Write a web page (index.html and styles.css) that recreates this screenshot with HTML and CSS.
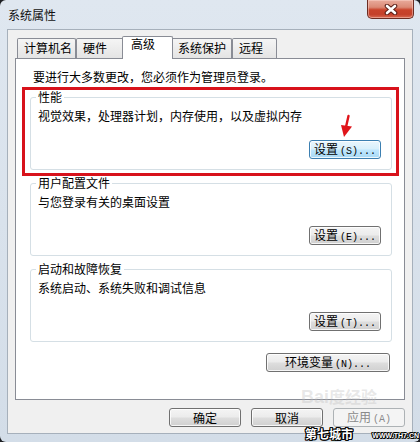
FILE: index.html
```html
<!DOCTYPE html>
<html lang="zh-CN">
<head>
<meta charset="utf-8">
<title>系统属性</title>
<link rel="stylesheet" href="styles.css">
</head>
<body>
<div class="window">
  <div class="titlebar">
    <span class="title">系统属性</span>
    <div class="close">
      <svg width="14" height="11" viewBox="0 0 14 11">
        <path d="M3 2 L11 9 M11 2 L3 9" stroke="#5a1e16" stroke-width="4.6" stroke-linecap="round"/>
        <path d="M3 2 L11 9 M11 2 L3 9" stroke="#ffffff" stroke-width="2.6" stroke-linecap="round"/>
      </svg>
    </div>
  </div>
  <div class="client">
    <div class="tabs">
      <div class="tab tab-name">计算机名</div>
      <div class="tab tab-hw">硬件</div>
      <div class="tab tab-adv selected">高级</div>
      <div class="tab tab-prot">系统保护</div>
      <div class="tab tab-remote">远程</div>
    </div>
    <div class="panel">
      <p class="intro">要进行大多数更改，您必须作为管理员登录。</p>
      <fieldset class="group">
        <legend>性能</legend>
        <p class="desc">视觉效果，处理器计划，内存使用，以及虚拟内存</p>
        <div class="group-actions"><button class="btn btn-hot">设置<span class="ak">(S)...</span></button></div>
      </fieldset>
      <fieldset class="group">
        <legend>用户配置文件</legend>
        <p class="desc">与您登录有关的桌面设置</p>
        <div class="group-actions"><button class="btn">设置<span class="ak">(E)...</span></button></div>
      </fieldset>
      <fieldset class="group">
        <legend>启动和故障恢复</legend>
        <p class="desc">系统启动、系统失败和调试信息</p>
        <div class="group-actions"><button class="btn">设置<span class="ak">(T)...</span></button></div>
      </fieldset>
      <div class="env-row"><button class="btn btn-env">环境变量<span class="ak">(N)...</span></button></div>
    </div>
    <div class="dialog-buttons">
      <button class="btn">确定</button>
      <button class="btn">取消</button>
      <button class="btn" disabled>应用<span class="ak">(A)</span></button>
    </div>
  </div>

  <div class="annot-rect"></div>
  <svg class="annot-arrow" width="16" height="26" viewBox="0 0 16 26">
    <path d="M10.5 2 L8 13" stroke="#e0141a" stroke-width="2.4" stroke-linecap="round"/>
    <polygon points="3,11 14,12.5 6,23" fill="#e0141a"/>
  </svg>
  <div class="wm-baidu"><span class="wm-bai">Bai</span><span class="wm-jy">度经验</span></div>
  <div class="wm-site"><span class="wm-cn">第七城市</span><span class="wm-url">WWW.TH7.CN</span></div>
</div>
</body>
</html>
```
FILE: styles.css
```css
html, body {
  margin: 0;
  padding: 0;
}
body {
  width: 420px;
  height: 442px;
  overflow: hidden;
  background: #1e2024;
  font-family: "Noto Sans CJK SC", "Liberation Sans", sans-serif;
  font-size: 12px;
  color: #000;
}
.window {
  position: relative;
  width: 420px;
  height: 442px;
  box-sizing: border-box;
  padding: 0 7px 8px 7px;
  background: linear-gradient(#dfe7f0, #d3dde8);
  border-radius: 6px;
  display: flex;
  flex-direction: column;
}
.titlebar {
  height: 29px;
  display: flex;
  align-items: flex-start;
  flex: none;
}
.title {
  padding: 8px 0 0 1px;
  line-height: 14px;
  color: #111;
}
.close {
  margin-left: auto;
  margin-right: -1px;
  width: 47px;
  height: 19px;
  box-sizing: border-box;
  border: 1px solid #6b2c22;
  border-top: none;
  border-radius: 0 0 5px 5px;
  background: linear-gradient(#e9ab9c 0%, #db8a76 40%, #c9432b 55%, #c4402a 80%, #d86a52 100%);
  box-shadow: inset 0 0 0 1px rgba(255, 220, 210, 0.45);
  display: flex;
  align-items: center;
  justify-content: center;
}
.client {
  flex: 1;
  background: #f0f0f0;
  border: 1px solid #a6b0bb;
  padding: 6px 7px 6px 7px;
  display: flex;
  flex-direction: column;
}
.tabs {
  display: flex;
  align-items: flex-end;
  height: 22px;
  padding-left: 2px;
  flex: none;
}
.tab {
  box-sizing: border-box;
  height: 20px;
  padding: 2px 0 0 6px;
  line-height: 14px;
  border: 1px solid #898c95;
  border-bottom: none;
  border-radius: 2px 2px 0 0;
  background: linear-gradient(#f5f5f5, #e4e4e4);
}
.tab-name { width: 59px; }
.tab-hw { width: 48px; }
.tab-prot { width: 61px; }
.tab-remote { width: 45px; }
.tab.selected {
  position: relative;
  z-index: 1;
  width: 51px;
  height: 23px;
  margin: 0 -2px -1px -2px;
  padding: 0 0 0 8px;
  background: #fff;
}
.panel {
  height: 342px;
  box-sizing: border-box;
  border: 1px solid #898c95;
  background: #fff;
  padding: 10px 12px 0 14px;
  display: flex;
  flex-direction: column;
  flex: none;
}
.intro {
  margin: 0 0 0 3px;
  line-height: 16px;
}
.group {
  margin: 5px 0 0 0;
  border: 1px solid #d5dfe5;
  border-radius: 3px;
  padding: 4px 10px 10px 7px;
  min-width: 0;
}
.group + .group {
  margin-top: 6px;
}
.group legend {
  padding: 0 2px;
  margin-left: -2px;
  line-height: 14px;
}
.desc {
  margin: 0;
  line-height: 16px;
}
.group-actions {
  margin-top: 16px;
  display: flex;
  justify-content: flex-end;
}
.env-row {
  margin-top: 11px;
  display: flex;
  justify-content: flex-end;
  padding-right: 2px;
}
.dialog-buttons {
  margin-top: 8px;
  display: flex;
  justify-content: flex-end;
  gap: 10px;
  flex: none;
}
.btn {
  box-sizing: border-box;
  width: 72px;
  height: 19px;
  padding: 0;
  margin: 0;
  border: 1px solid #707070;
  border-radius: 3px;
  background: linear-gradient(#f4f4f4 0%, #ececec 45%, #dddddd 55%, #d0d0d0 100%);
  box-shadow: inset 0 0 0 1px rgba(255, 255, 255, 0.8);
  font-family: "Noto Sans CJK SC", "Liberation Sans", sans-serif;
  font-size: 12px;
  line-height: 16px;
  color: #000;
  text-align: center;
  white-space: nowrap;
}
.btn-hot {
  border-color: #3c7fb1;
  background: linear-gradient(#eaf6fd 0%, #d9f0fc 45%, #bee6fd 55%, #a7d9f5 100%);
}
.btn-env {
  width: 124px;
}
.btn:disabled {
  border-color: #adb2b5;
  background: #f4f4f4;
  box-shadow: none;
  color: #8a8a8a;
}
.ak {
  font-family: "Liberation Mono", "DejaVu Sans Mono", monospace;
  font-size: 10px;
  margin-left: 2px;
}

/* annotations over the screenshot */
.annot-rect {
  position: absolute;
  left: 22px;
  top: 87px;
  width: 377px;
  height: 89px;
  box-sizing: border-box;
  border: 3px solid #d8121b;
}
.annot-arrow {
  position: absolute;
  left: 338px;
  top: 114px;
}
.wm-baidu {
  position: absolute;
  left: 301px;
  top: 386px;
  font-family: "Liberation Sans", sans-serif;
  font-weight: bold;
  font-size: 18px;
  line-height: 20px;
  color: rgba(190, 190, 190, 0.35);
  white-space: nowrap;
}
.wm-jy {
  font-family: "Noto Sans CJK SC", sans-serif;
  font-size: 16px;
}
.wm-site {
  position: absolute;
  left: 305px;
  top: 427px;
  width: 114px;
  display: flex;
  align-items: flex-end;
  justify-content: space-between;
  white-space: nowrap;
}
.wm-cn {
  font-family: "Noto Sans CJK SC", sans-serif;
  font-weight: bold;
  font-size: 12px;
  line-height: 14px;
  color: #fff;
  text-shadow: 1px 0 0 #000, -1px 0 0 #000, 0 1px 0 #000, 0 -1px 0 #000, 1px 1px 0 #000, -1px -1px 0 #000, 1px -1px 0 #000, -1px 1px 0 #000;
}
.wm-url {
  font-family: "Liberation Sans", sans-serif;
  font-weight: bold;
  font-size: 7px;
  line-height: 10px;
  color: #fff;
  text-shadow: 1px 0 0 #000, -1px 0 0 #000, 0 1px 0 #000, 0 -1px 0 #000, 1px 1px 0 #000, -1px -1px 0 #000;
}
```
